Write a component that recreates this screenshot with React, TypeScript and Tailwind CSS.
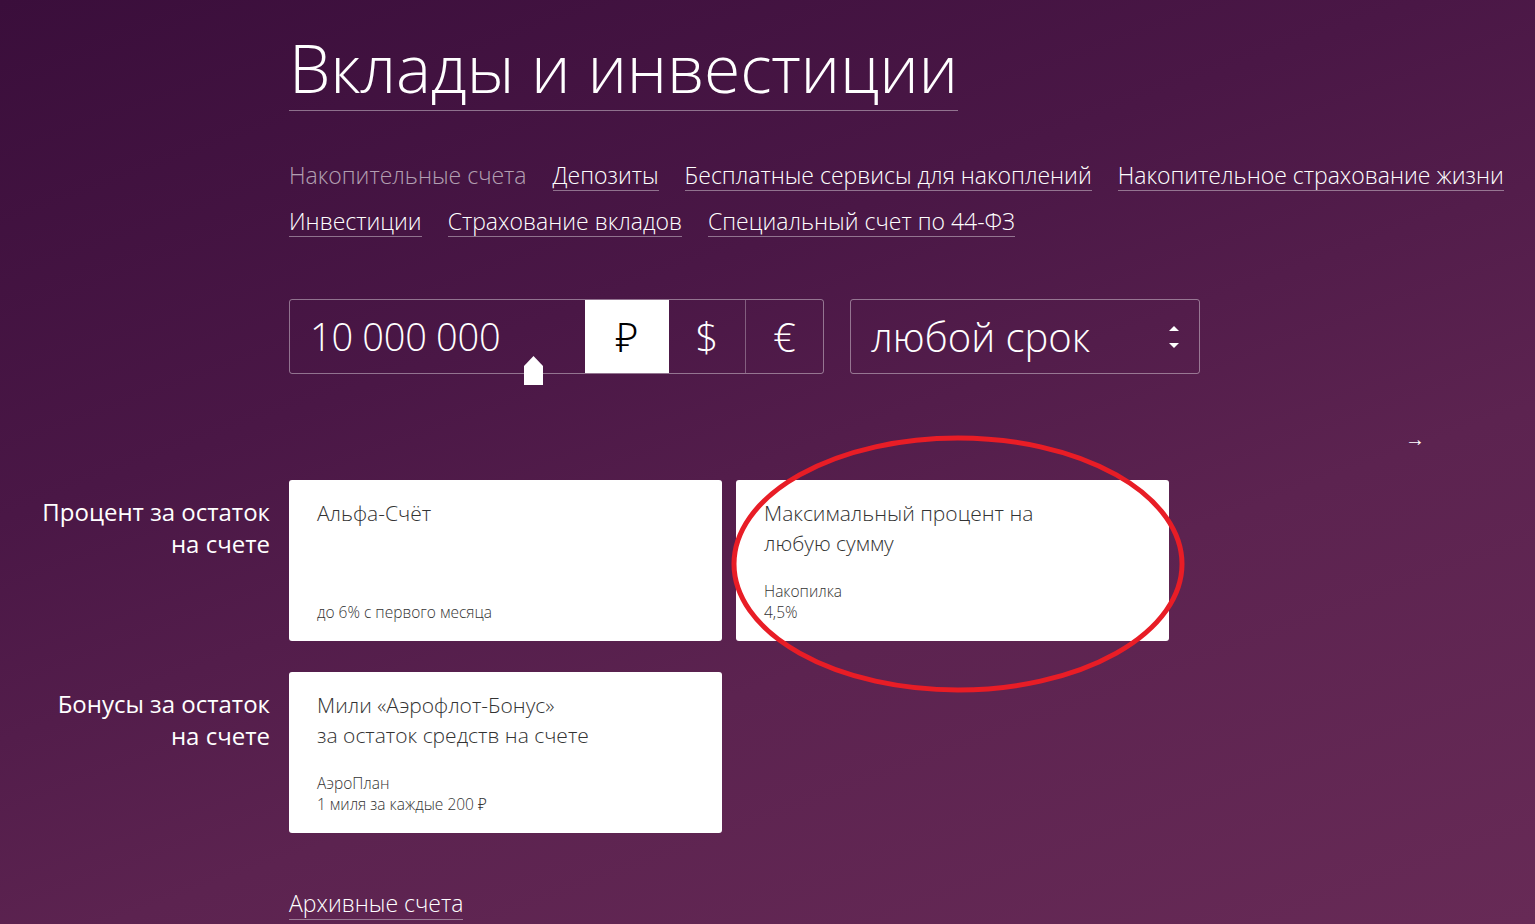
import React from "react";

const font = { fontFamily: '"Open Sans", "Noto Sans", sans-serif' };

function Link({ children, active = false }: { children: React.ReactNode; active?: boolean }) {
  return (
    <span
      className={
        active
          ? "text-[23px] leading-[30px] font-light text-white/60"
          : "text-[23px] leading-[30px] font-light text-white border-b border-white/40"
      }
    >
      {children}
    </span>
  );
}

function Card({ title, sub1, sub2 }: { title: React.ReactNode; sub1?: string; sub2?: string }) {
  return (
    <div className="w-[433px] h-[161px] bg-white rounded-[3px] px-[28px] pt-[18px] pb-[18px] flex flex-col justify-between">
      <div className="text-[21px] leading-[30px] font-light text-[#333]">{title}</div>
      <div className="text-[15.5px] leading-[21px] font-light text-[#333]">
        {sub1 && <div>{sub1}</div>}
        {sub2 && <div>{sub2}</div>}
      </div>
    </div>
  );
}

export default function App() {
  return (
    <div
      style={font}
      className="relative w-[1535px] h-[924px] overflow-hidden bg-[linear-gradient(160deg,#3a0e3b_0%,#4a1746_35%,#5c2350_65%,#672a56_100%)] text-white"
    >
      <div className="pl-[289px] pt-[27px]">
        <div className="inline-block border-b border-white/40 pb-[3px]">
          <h1 className="text-[66px] leading-[80px] font-light tracking-[-0.2px]">Вклады и инвестиции</h1>
        </div>

        <div className="mt-[49px] flex flex-wrap gap-x-[26px] gap-y-[15px] w-[1230px]">
          <Link active>Накопительные счета</Link>
          <Link>Депозиты</Link>
          <Link>Бесплатные сервисы для накоплений</Link>
          <Link>Накопительное страхование жизни</Link>
          <Link>Инвестиции</Link>
          <Link>Страхование вкладов</Link>
          <Link>Специальный счет по 44-ФЗ</Link>
        </div>

        <div className="mt-[62px] flex gap-[26px]">
          <div className="relative flex h-[75px] w-[535px] border border-white/40 rounded-[3px]">
            <div className="w-[295px] flex items-center pl-[20px] text-[38px] font-light tracking-[-0.3px]">10 000 000</div>
            <div className="w-[84px] bg-white text-black flex items-center justify-center text-[40px] font-light">₽</div>
            <div className="w-[77px] border-r border-white/30 flex items-center justify-center text-[40px] font-light">$</div>
            <div className="flex-1 flex items-center justify-center text-[40px] font-light">€</div>
            <svg className="absolute left-[234px] top-[56px]" width="19" height="29" viewBox="0 0 19 29">
              <path d="M0 10 L9.5 0 L19 10 L19 29 L0 29 Z" fill="#fff" />
            </svg>
          </div>
          <div className="relative flex items-center h-[75px] w-[350px] border border-white/40 rounded-[3px] pl-[20px]">
            <span className="text-[40px] font-light">любой срок</span>
            <svg className="absolute right-[18px] top-[24px]" width="14" height="26" viewBox="0 0 14 26">
              <path d="M2 7 L7 2 L12 7 Z" fill="#fff" />
              <path d="M2 19 L7 24 L12 19 Z" fill="#fff" />
            </svg>
          </div>
        </div>
      </div>

      <div className="absolute left-[1405px] top-[424px] text-[20px]">→</div>

      <div className="mt-[106px] flex flex-col gap-[31px]">
        <div className="flex">
          <div className="w-[270px] text-right text-[24px] leading-[32px] font-normal pt-[16px]">
            Процент за остаток
            <br />
            на счете
          </div>
          <div className="ml-[19px] flex gap-[14px]">
            <Card title="Альфа-Счёт" sub2="до 6% с первого месяца" />
            <Card title={<>Максимальный процент на<br />любую сумму</>} sub1="Накопилка" sub2="4,5%" />
          </div>
        </div>
        <div className="flex">
          <div className="w-[270px] text-right text-[24px] leading-[32px] font-normal pt-[16px]">
            Бонусы за остаток
            <br />
            на счете
          </div>
          <div className="ml-[19px] flex gap-[14px]">
            <Card
              title={<>Мили «Аэрофлот-Бонус»<br />за остаток средств на счете</>}
              sub1="АэроПлан"
              sub2="1 миля за каждые 200 ₽"
            />
          </div>
        </div>
      </div>

      <div className="pl-[289px] mt-[55px]">
        <span className="text-[23px] leading-[30px] font-light border-b border-white/40">Архивные счета</span>
      </div>

      <svg className="absolute left-[730px] top-[434px] pointer-events-none" width="456" height="260" viewBox="0 0 456 260">
        <ellipse cx="228" cy="130" rx="224" ry="126" fill="none" stroke="#e81d26" strokeWidth="5" />
      </svg>
    </div>
  );
}
